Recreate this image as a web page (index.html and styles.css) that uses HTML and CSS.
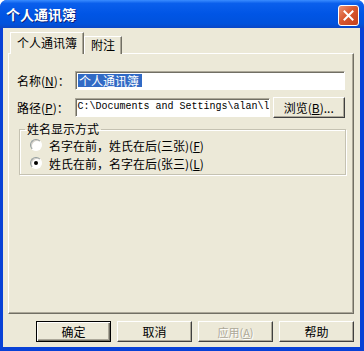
FILE: index.html
```html
<html>
<head>
    <title>个人通讯簿</title>
    <meta http-equiv="content-type" content="text/html; charset=UTF-8">
    <link rel="stylesheet" href="styles.css">
</head>
<body>
    <div class="window">
        <div class="titlebar">
            <span class="title">个人通讯簿</span>
            <span class="close">
                <svg width="11" height="11" viewBox="0 0 11 11">
                    <path d="M1.5 1.5 L9.5 9.5 M9.5 1.5 L1.5 9.5" stroke="#fff" stroke-width="2" stroke-linecap="square" />
                </svg>
            </span>
        </div>
        <div class="frame">
            <div class="tabs">
                <div class="tab active">个人通讯簿</div>
                <div class="tab">附注</div>
            </div>
            <div class="panel">
                <div class="row">
                    <span class="label">名称(<u>N</u>)：</span>
                    <div class="field"><span class="sel">个人通讯簿</span></div>
                </div>
                <div class="row">
                    <span class="label">路径(<u>P</u>)：</span>
                    <div class="field path">C:\Documents and Settings\alan\l</div>
                    <span class="btn browse">浏览(<u>B</u>)...</span>
                </div>
                <fieldset class="group">
                    <legend>姓名显示方式</legend>
                    <div class="radio"><span class="circle"></span>名字在前，姓氏在后(三张)(<u>F</u>)</div>
                    <div class="radio"><span class="circle checked"></span>姓氏在前，名字在后(张三)(<u>L</u>)</div>
                </fieldset>
            </div>
            <div class="buttons">
                <span class="btn default">确定</span>
                <span class="btn">取消</span>
                <span class="btn disabled">应用(<u>A</u>)</span>
                <span class="btn">帮助</span>
            </div>
        </div>
    </div>
</body>
</html>
```

FILE: styles.css
```css
body {
    margin: 0;
    font-family: "Noto Sans CJK SC", "Liberation Sans", sans-serif;
    font-size: 12px;
    color: #000;
}

.window {
    width: 364px;
    height: 351px;
    display: flex;
    flex-direction: column;
    background: #0841d6;
    border-radius: 7px 7px 0 0;
    overflow: hidden;
}

.titlebar {
    height: 28px;
    display: flex;
    align-items: center;
    justify-content: space-between;
    padding: 0 5px 0 6px;
    background: linear-gradient(to bottom, #3a8cff 0%, #0a5fec 12%, #0055e5 50%, #0052dc 85%, #0a47c6 100%);
}

.title {
    color: #fff;
    font-weight: bold;
    font-size: 14px;
    text-shadow: 1px 1px #0a1f7a;
}

.close {
    width: 19px;
    height: 19px;
    margin-top: 2px;
    border: 1px solid #fff;
    border-radius: 3px;
    background: linear-gradient(135deg, #eb9273 0%, #d9582f 45%, #c2401c 100%);
    display: flex;
    align-items: center;
    justify-content: center;
}

.frame {
    flex: 1;
    margin: 0 4px 4px 3px;
    background: #ece9d8;
    padding: 4px 6px 5px 5px;
    display: flex;
    flex-direction: column;
}

.tabs {
    display: flex;
    align-items: flex-end;
    padding-left: 2px;
    margin-bottom: -1px;
    position: relative;
    z-index: 1;
}

.tab {
    height: 17px;
    line-height: 16px;
    padding: 0 6px;
    background: #ece9d8;
    border-top: 1px solid #fff;
    border-left: 1px solid #fff;
    border-right: 1px solid #716f64;
    box-shadow: inset -1px 0 #aca899;
}

.tab.active {
    height: 21px;
    line-height: 20px;
    width: 60px;
    padding: 0 6px;
}

.panel {
    flex: 1;
    border: 1px solid;
    border-color: #fff #716f64 #716f64 #fff;
    box-shadow: inset -1px -1px #aca899;
    padding: 17px 8px 0 8px;
}

.row {
    display: flex;
    align-items: center;
    height: 19px;
    margin-bottom: 7px;
}

.row + .row {
    height: 21px;
    margin-bottom: 4px;
}

.label {
    width: 58px;
    white-space: nowrap;
}

.field {
    flex: 1;
    height: 19px;
    box-sizing: border-box;
    background: #fff;
    border: 1px solid;
    border-color: #aca899 #fff #fff #aca899;
    box-shadow: inset 1px 1px #716f64;
    padding: 2px 0 0 2px;
    line-height: 13px;
    overflow: hidden;
    white-space: nowrap;
}

.sel {
    display: inline-block;
    background: #316ac5;
    color: #fff;
    padding: 0 3px 0 1px;
    line-height: 13px;
}

.field.path {
    flex: none;
    width: 195px;
    font-family: "Liberation Mono", monospace;
    font-size: 10px;
    line-height: 14px;
    padding-top: 1px;
}

.btn {
    display: flex;
    align-items: center;
    justify-content: center;
    box-sizing: border-box;
    height: 21px;
    background: #ece9d8;
    border: 1px solid;
    border-color: #fff #404040 #404040 #fff;
    box-shadow: inset -1px -1px #aca899;
    white-space: nowrap;
}

.browse {
    width: 73px;
    margin-left: 3px;
}

.group {
    margin: 0 -1px 0 2px;
    padding: 0 0 2px 5px;
    border: 1px solid #c5c2b2;
    box-shadow: inset 1px 1px #fff, 1px 1px #fff;
}

.group legend {
    padding: 0 2px;
    line-height: 14px;
}

.radio {
    display: flex;
    align-items: center;
    height: 18px;
    padding-left: 5px;
}

.circle {
    width: 10px;
    height: 10px;
    border: 1px solid;
    border-color: #919b9c #fff #fff #919b9c;
    border-radius: 50%;
    background: #fff;
    box-shadow: inset 1px 1px #d4d0c8;
    margin-right: 7px;
    display: flex;
    align-items: center;
    justify-content: center;
}

.circle.checked::after {
    content: "";
    width: 4px;
    height: 4px;
    border-radius: 50%;
    background: #000;
}

.buttons {
    display: flex;
    justify-content: flex-end;
    gap: 6px;
    margin-top: 7px;
}

.buttons .btn {
    width: 75px;
}

.btn.default {
    border-color: #000;
    box-shadow: inset 1px 1px #fff, inset -1px -1px #716f64, inset -2px -2px #aca899;
}

.btn.disabled {
    color: #aca899;
    text-shadow: 1px 1px #fff;
    font-size: 11px;
}
```
